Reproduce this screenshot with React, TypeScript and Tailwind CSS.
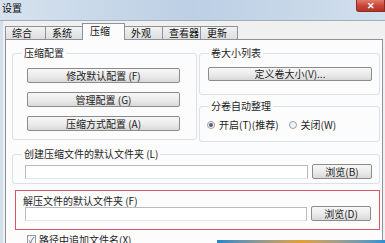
import type { ReactNode } from "react";

const TABS = [
  { label: "综合", w: "w-[40px]" },
  { label: "系统", w: "w-[38px]" },
  { label: "压缩", w: "w-[43px]", active: true },
  { label: "外观", w: "w-[38px]" },
  { label: "查看器", w: "w-[38px]" },
  { label: "更新", w: "w-[38px]" },
];

function Btn({ children, className = "" }: { children: ReactNode; className?: string }) {
  return (
    <button
      className={`flex items-center justify-center rounded-[2px] border border-[#8c8c8c] bg-linear-to-b from-[#f7f7f7] via-[#ececec] to-[#d9d9d9] text-[10px] leading-none text-[#1c1c1c] ${className}`}
    >
      {children}
    </button>
  );
}

function Group({ title, className = "", children }: { title: string; className?: string; children?: ReactNode }) {
  return (
    <fieldset className={`rounded-[3px] border border-[#d9e0e6] ${className}`}>
      <legend className="ml-[9px] px-[2px] text-[10px] leading-[12px] text-[#1c1c1c]">{title}</legend>
      {children}
    </fieldset>
  );
}

function Field({ className = "" }: { className?: string }) {
  return <div className={`h-[14px] border border-[#b7bac1] border-b-[#dde5ee] bg-white ${className}`} />;
}

function Radio({ checked, label }: { checked?: boolean; label: string }) {
  return (
    <div className="flex items-center gap-[4px]">
      <span className="flex h-[8px] w-[8px] items-center justify-center rounded-full border border-[#9aa2ab] bg-[#f4f4f4]">
        {checked && <span className="h-[4px] w-[4px] rounded-full bg-[#55606c]" />}
      </span>
      <span className="text-[10px] leading-[11px] text-[#1c1c1c]">{label}</span>
    </div>
  );
}

export default function App() {
  return (
    <div className="relative flex h-[243px] w-[385px] flex-col overflow-hidden bg-[#f0f0f0] font-['Noto_Sans_CJK_SC',sans-serif]">
      {/* title bar */}
      <div className="flex h-[21px] shrink-0 items-start justify-between border-b border-[#a3aebb] bg-linear-to-r from-[#d6e2ee] via-[#bccfe4] to-[#d2dfed]">
        <span className="ml-[2px] mt-[2px] text-[10px] leading-[11px] text-[#111]">设置</span>
        <button className="flex h-[12px] w-[29px] items-center justify-center rounded-bl-[3px] border border-t-0 border-[#8d2a22] bg-linear-to-b from-[#e07a6c] via-[#c9473a] to-[#b2342a] text-[9px] font-bold leading-none text-white">
          ✕
        </button>
      </div>

      <div className="flex flex-1 flex-col border-l-[3px] border-[#d4dfeb] pl-[2px] pr-[2px] pt-[3px]">
        {/* tabs */}
        <div className="flex h-[15px] items-end">
          {TABS.map((t) =>
            t.active ? (
              <div
                key={t.label}
                className={`relative z-10 -mb-px -mx-px flex h-[17px] ${t.w} items-start border border-b-0 border-[#8e939b] bg-[#fcfcfc] pl-[7px] pt-[1px] text-[10px] leading-[12px] text-[#111]`}
              >
                {t.label}
              </div>
            ) : (
              <div
                key={t.label}
                className={`flex h-[13px] ${t.w} items-center border border-b-0 border-r-0 border-[#8e939b] bg-linear-to-b from-[#f2f2f2] to-[#dedede] pl-[6px] text-[10px] leading-none text-[#111] last:border-r`}
              >
                {t.label}
              </div>
            )
          )}
        </div>

        {/* panel */}
        <div className="flex flex-1 flex-col border border-[#8e939b] bg-[#fcfcfc] pl-[6px] pr-[2px] pt-[7px]">
          <div className="grid grid-cols-[185px_1fr] gap-x-[2px]">
            <Group title="压缩配置" className="h-[93px]">
              <div className="ml-[14px] mt-[9px] flex w-[153px] flex-col gap-[9px]">
                <Btn className="h-[15px]">修改默认配置 (F)</Btn>
                <Btn className="h-[15px]">管理配置 (G)</Btn>
                <Btn className="h-[15px]">压缩方式配置 (A)</Btn>
              </div>
            </Group>
            <div className="flex flex-col gap-[5px]">
              <Group title="卷大小列表" className="h-[48px]">
                <Btn className="ml-[8px] mt-[8px] h-[14px] w-[164px]">定义卷大小(V)...</Btn>
              </Group>
              <Group title="分卷自动整理" className="h-[42px]">
                <div className="ml-[7px] mt-[7px] flex items-center gap-[10px]">
                  <Radio checked label="开启(T)(推荐)" />
                  <Radio label="关闭(W)" />
                </div>
              </Group>
            </div>
          </div>

          <Group title="创建压缩文件的默认文件夹 (L)" className="mt-[6px] h-[36px]">
            <div className="ml-[12px] mt-[4px] flex items-center gap-[4px]">
              <Field className="w-[283px]" />
              <Btn className="h-[15px] w-[60px]">浏览(B)</Btn>
            </div>
          </Group>

          <div className="ml-[3px] mt-[6px] h-[40px] border border-[#d9566a] pl-[7px] pt-[4px]">
            <div className="text-[10px] leading-[11px] text-[#1c1c1c]">解压文件的默认文件夹 (F)</div>
            <div className="ml-[2px] flex items-center gap-[4px]">
              <Field className="w-[282px]" />
              <Btn className="h-[15px] w-[60px]">浏览(D)</Btn>
            </div>
          </div>

          <div className="ml-[15px] mt-[4px] flex items-center gap-[3px]">
            <span className="flex h-[9px] w-[9px] items-center justify-center border border-[#8f98a3] bg-[#f6f6f6] text-[8px] leading-none text-[#3b4a5a]">
              ✓
            </span>
            <span className="text-[10px] leading-[11px] text-[#1c1c1c]">路径中追加文件名(X)</span>
          </div>
        </div>
      </div>

      {/* window showing behind, lower right */}
      <div className="absolute bottom-0 right-0 h-[3px] w-[168px] bg-linear-to-r from-[#1f86c9] via-[#e0a030] to-[#2a90d2]" />
    </div>
  );
}
